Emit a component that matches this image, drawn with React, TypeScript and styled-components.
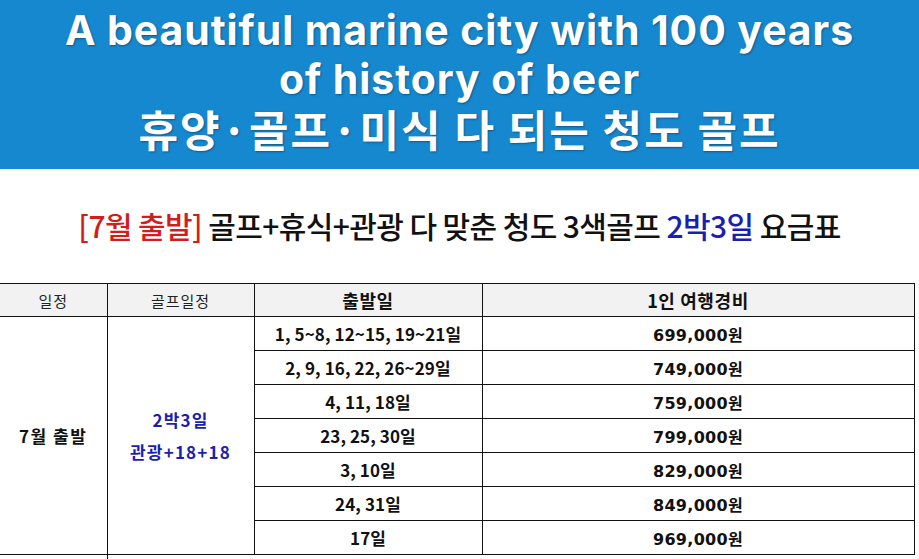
import React from "react";
import styled, { createGlobalStyle } from "styled-components";

const Global = createGlobalStyle`
  html, body { margin: 0; padding: 0; background: #ffffff; }
  body { font-family: "Noto Sans CJK KR", "Noto Sans", sans-serif; }
`;

const Page = styled.div`
  width: 919px;
  height: 559px;
  overflow: hidden;
  display: flex;
  flex-direction: column;
  background: #fff;
`;

const Banner = styled.header`
  flex: 0 0 169px;
  background: #1688cf;
  display: flex;
  flex-direction: column;
  align-items: center;
  justify-content: flex-start;
  padding-top: 6px;
  box-sizing: border-box;
  color: #fff;
  text-shadow: 1px 1px 2px rgba(0, 0, 0, 0.35);
`;

const BannerLine = styled.div<{ $ko?: boolean }>`
  font-family: ${(p) => (p.$ko ? `"Noto Sans CJK KR", sans-serif` : `Inter, "Noto Sans", sans-serif`)};
  font-weight: 700;
  font-size: ${(p) => (p.$ko ? "43px" : "41px")};
  line-height: 49px;
  height: 49px;
  letter-spacing: ${(p) => (p.$ko ? "2px" : "0.9px")};
  white-space: nowrap;
`;

const TitleArea = styled.section`
  flex: 0 0 114px;
  display: flex;
  align-items: center;
  justify-content: center;
`;

const Title = styled.h1`
  margin: 0;
  font-family: "Noto Sans CJK KR", sans-serif;
  font-weight: 500;
  font-size: 30px;
  letter-spacing: -0.6px;
  color: #111;
  white-space: nowrap;
  padding-bottom: 2px;
`;

const Tone = styled.span<{ $c: "red" | "blue" }>`
  color: ${(p) => (p.$c === "red" ? "#d41c1c" : "#1a1fb0")};
`;

const Table = styled.table`
  border-collapse: collapse;
  table-layout: fixed;
  width: 914px;
  flex-shrink: 0;
  font-family: "Noto Sans CJK KR", sans-serif;
  color: #111;
`;

const HeadRow = styled.tr`
  height: 33px;
  background: #f2f2f2;
`;

const BodyRow = styled.tr`
  height: 34px;
`;

const Th = styled.th<{ $small?: boolean; $first?: boolean }>`
  border: 1px solid #111;
  border-left: ${(p) => (p.$first ? "none" : "1px solid #111")};
  padding: 0;
  font-weight: ${(p) => (p.$small ? 400 : 700)};
  font-size: ${(p) => (p.$small ? "15px" : "18px")};
  letter-spacing: ${(p) => (p.$small ? "1px" : "0.6px")};
  color: ${(p) => (p.$small ? "#222" : "#111")};
  text-align: center;
  vertical-align: middle;
`;

const Td = styled.td<{ $first?: boolean }>`
  border: 1px solid #111;
  border-left: ${(p) => (p.$first ? "none" : "1px solid #111")};
  padding: 0;
  text-align: center;
  vertical-align: middle;
  font-weight: 700;
  font-size: 16px;
`;

const Month = styled.span`
  font-size: 17px;
  letter-spacing: 1.5px;
`;

const Golf = styled.div`
  color: #1a1fb0;
  font-size: 17px;
  line-height: 32px;
  letter-spacing: 1.2px;
`;

const Dates = styled.span`
  font-size: 17px;
  letter-spacing: 0.1px;
`;

const Price = styled.span`
  font-family: "DejaVu Sans", "Noto Sans CJK KR", sans-serif;
  font-weight: 700;
  font-size: 16px;
  letter-spacing: 0.3px;
`;

const TailCell = styled.td<{ $first?: boolean }>`
  border-top: 1px solid #111;
  border-left: ${(p) => (p.$first ? "none" : "1px solid #111")};
  padding: 0;
`;

const rows = [
  { d: "1, 5~8, 12~15, 19~21일", p: "699,000원" },
  { d: "2, 9, 16, 22, 26~29일", p: "749,000원" },
  { d: "4, 11, 18일", p: "759,000원" },
  { d: "23, 25, 30일", p: "799,000원" },
  { d: "3, 10일", p: "829,000원" },
  { d: "24, 31일", p: "849,000원" },
  { d: "17일", p: "969,000원" },
];

export default function App() {
  return (
    <Page>
      <Global />
      <Banner>
        <BannerLine>A beautiful marine city with 100 years</BannerLine>
        <BannerLine>of history of beer</BannerLine>
        <BannerLine $ko>휴양·골프·미식 다 되는 청도 골프</BannerLine>
      </Banner>
      <TitleArea>
        <Title>
          <Tone $c="red">[7월 출발]</Tone> 골프+휴식+관광 다 맞춘 청도 3색골프{" "}
          <Tone $c="blue">2박3일</Tone> 요금표
        </Title>
      </TitleArea>
      <Table>
        <colgroup>
          <col style={{ width: 107 }} />
          <col style={{ width: 147 }} />
          <col style={{ width: 228 }} />
          <col style={{ width: 432 }} />
        </colgroup>
        <thead>
          <HeadRow>
            <Th $small $first>일정</Th>
            <Th $small>골프일정</Th>
            <Th>출발일</Th>
            <Th>1인 여행경비</Th>
          </HeadRow>
        </thead>
        <tbody>
          {rows.map((r, i) => (
            <BodyRow key={r.d}>
              {i === 0 && (
                <>
                  <Td $first rowSpan={rows.length}>
                    <Month>7월 출발</Month>
                  </Td>
                  <Td rowSpan={rows.length}>
                    <Golf>2박3일</Golf>
                    <Golf>관광+18+18</Golf>
                  </Td>
                </>
              )}
              <Td>
                <Dates>{r.d}</Dates>
              </Td>
              <Td>
                <Price>{r.p}</Price>
              </Td>
            </BodyRow>
          ))}
          <BodyRow>
            <TailCell $first />
            <TailCell colSpan={3} />
          </BodyRow>
        </tbody>
      </Table>
    </Page>
  );
}
